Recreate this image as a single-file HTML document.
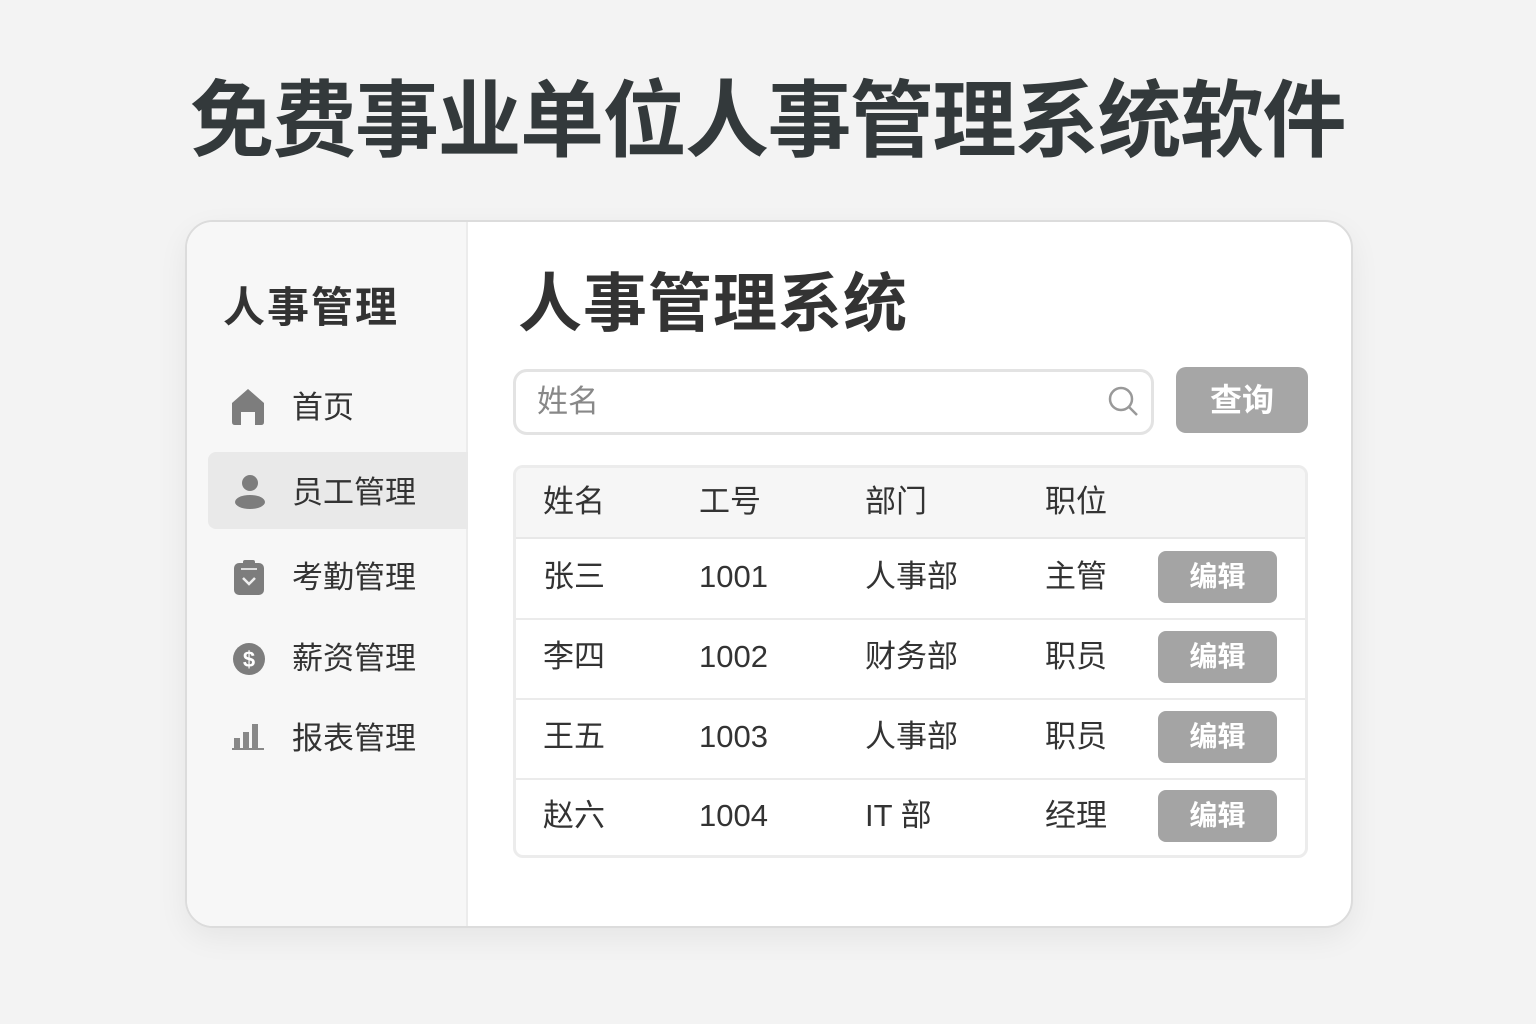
<!DOCTYPE html>
<html><head><meta charset="utf-8"><style>
*{margin:0;padding:0;box-sizing:border-box}
body{width:1536px;height:1024px;background:#f3f3f3;font-family:"Liberation Sans","Noto Sans CJK SC",sans-serif;position:relative;overflow:hidden;color:#333}
.abs{position:absolute}
h1{position:absolute;left:190px;top:69px;font-size:84px;letter-spacing:-1.5px;font-weight:700;color:#33393b;white-space:nowrap;line-height:104px}
.card{left:185px;top:220px;width:1168px;height:708px;background:#fff;border:2px solid #dcdcdc;border-radius:28px;overflow:hidden;box-shadow:0 10px 30px rgba(0,0,0,.06)}
.side{left:0;top:0;width:281px;height:100%;background:#f7f7f7;border-right:2px solid #ececec}
.nav{position:absolute;left:105px;font-size:31px;color:#333;line-height:40px}
.t{position:absolute;font-size:31px;color:#333;line-height:40px}
.btn{position:absolute;left:1158px;width:119px;height:52px;background:#a4a4a4;border-radius:8px;color:#fff;font-size:28px;text-align:center;line-height:52px;font-weight:700}
</style></head><body>
<h1>免费事业单位人事管理系统软件</h1>
<div class="abs card">
 <div class="abs side">
  <div class="abs" style="left:36px;top:52px;font-size:42px;font-weight:700;color:#333;letter-spacing:2px">人事管理</div>
  <div class="abs" style="left:21px;top:230px;width:260px;height:77px;background:#e9e9e9;border-radius:8px 0 0 8px"></div>
  <svg class="abs" style="left:44px;top:166px" width="34" height="38" viewBox="0 0 34 38"><path d="M17 1 L33 15 V34 Q33 37 30 37 H24 V24 H10 V37 H4 Q1 37 1 34 V15 Z" fill="#7d7d7d"/></svg>
  <div class="nav" style="top:166px">首页</div>
  <svg class="abs" style="left:46px;top:252px" width="34" height="36" viewBox="0 0 34 36"><circle cx="17" cy="9" r="8" fill="#7d7d7d"/><ellipse cx="17" cy="28" rx="15" ry="7" fill="#7d7d7d"/></svg>
  <div class="nav" style="top:251px">员工管理</div>
  <svg class="abs" style="left:46px;top:338px" width="32" height="36" viewBox="0 0 32 36"><rect x="1" y="3" width="30" height="32" rx="5" fill="#7d7d7d"/><rect x="10" y="0" width="12" height="6" rx="2" fill="#7d7d7d"/><path d="M10 18 L16 24 L22 18" stroke="#eee" stroke-width="2.5" fill="none"/><rect x="8" y="8" width="16" height="2" fill="#ddd"/></svg>
  <div class="nav" style="top:336px">考勤管理</div>
  <svg class="abs" style="left:45px;top:420px" width="34" height="34" viewBox="0 0 34 34"><circle cx="17" cy="17" r="16" fill="#7d7d7d"/><text x="17" y="25" font-size="22" font-weight="700" fill="#fff" text-anchor="middle" font-family="Liberation Sans">$</text></svg>
  <div class="nav" style="top:417px">薪资管理</div>
  <svg class="abs" style="left:45px;top:500px" width="34" height="30" viewBox="0 0 34 30"><rect x="2" y="16" width="6" height="12" fill="#888"/><rect x="11" y="10" width="6" height="18" fill="#888"/><rect x="20" y="2" width="6" height="26" fill="#888"/><rect x="0" y="26" width="32" height="2" fill="#888"/></svg>
  <div class="nav" style="top:497px">报表管理</div>
 </div>
 <div class="abs" style="left:331px;top:42px;font-size:64px;font-weight:700;color:#333;letter-spacing:1px;line-height:80px">人事管理系统</div>
 <div class="abs" style="left:326px;top:147px;width:641px;height:66px;border:3px solid #e3e3e3;border-radius:14px;background:#fff"></div>
 <div class="abs" style="left:350px;top:160px;font-size:31px;color:#888;line-height:40px">姓名</div>
 <svg class="abs" style="left:920px;top:163px" width="34" height="34" viewBox="0 0 34 34"><circle cx="14" cy="14" r="11" stroke="#999" stroke-width="2.5" fill="none"/><path d="M22 22 L30 30" stroke="#999" stroke-width="2.5"/></svg>
 <div class="abs" style="left:989px;top:145px;width:132px;height:66px;background:#a6a6a6;border-radius:10px;color:#fff;font-size:32px;line-height:66px;text-align:center;font-weight:700">查询</div>
 <div class="abs" style="left:326px;top:243px;width:795px;height:393px;border:3px solid #ececec;border-radius:10px;overflow:hidden">
  <div class="abs" style="left:0;top:0;width:100%;height:71px;background:#f6f6f6;border-bottom:2px solid #e8e8e8"></div>
  <div class="abs" style="left:0;top:150px;width:100%;height:2px;background:#ebebeb"></div>
  <div class="abs" style="left:0;top:230px;width:100%;height:2px;background:#ebebeb"></div>
  <div class="abs" style="left:0;top:310px;width:100%;height:2px;background:#ebebeb"></div>
 </div>
</div>
<div class="t" style="left:543px;top:482px">姓名</div><div class="t" style="left:699px;top:482px">工号</div><div class="t" style="left:865px;top:482px">部门</div><div class="t" style="left:1045px;top:482px">职位</div>
<div class="t" style="left:543px;top:557px">张三</div><div class="t" style="left:699px;top:557px">1001</div><div class="t" style="left:865px;top:557px">人事部</div><div class="t" style="left:1045px;top:557px">主管</div><div class="btn" style="top:551px">编辑</div>
<div class="t" style="left:543px;top:637px">李四</div><div class="t" style="left:699px;top:637px">1002</div><div class="t" style="left:865px;top:637px">财务部</div><div class="t" style="left:1045px;top:637px">职员</div><div class="btn" style="top:631px">编辑</div>
<div class="t" style="left:543px;top:717px">王五</div><div class="t" style="left:699px;top:717px">1003</div><div class="t" style="left:865px;top:717px">人事部</div><div class="t" style="left:1045px;top:717px">职员</div><div class="btn" style="top:711px">编辑</div>
<div class="t" style="left:543px;top:796px">赵六</div><div class="t" style="left:699px;top:796px">1004</div><div class="t" style="left:865px;top:796px">IT 部</div><div class="t" style="left:1045px;top:796px">经理</div><div class="btn" style="top:790px">编辑</div>
</body></html>
